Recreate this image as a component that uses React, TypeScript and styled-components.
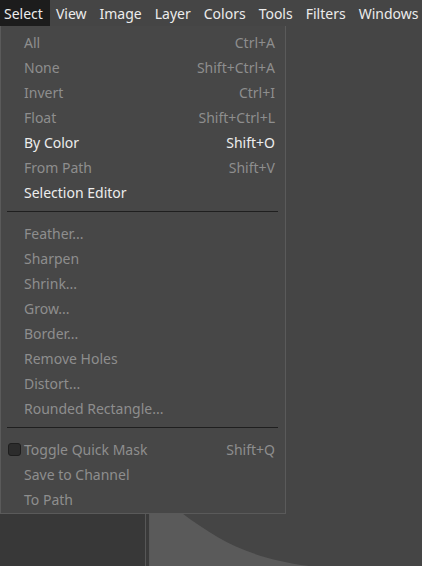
import React from "react";
import styled, { createGlobalStyle } from "styled-components";

const Global = createGlobalStyle`
  html, body { margin: 0; padding: 0; }
  body {
    width: 422px;
    height: 566px;
    overflow: hidden;
    background: #454545;
    font-family: "Noto Sans", "DejaVu Sans", sans-serif;
  }
`;

const Screen = styled.div`
  position: relative;
  width: 422px;
  height: 566px;
  display: flex;
  flex-direction: column;
  overflow: hidden;
`;

const MenuBar = styled.div`
  display: flex;
  height: 26px;
  background: #454545;
  flex: none;
`;

const BarItem = styled.div<{ $active?: boolean }>`
  display: flex;
  align-items: center;
  padding: 0 7px 0 4px;
  margin-right: 2px;
  font-size: 14px;
  color: #ececec;
  white-space: nowrap;
  background: ${(p) => (p.$active ? "#1c1c1c" : "transparent")};
`;

const Workspace = styled.div`
  flex: 1;
  display: flex;
`;

const Dock = styled.div`
  width: 145px;
  background: #383838;
  flex: none;
`;

const DockEdge = styled.div`
  width: 3px;
  flex: none;
  border-left: 1px solid #575757;
  border-right: 1px solid #575757;
  background: #3a3a3a;
`;

const Canvas = styled.div`
  flex: 1;
  position: relative;
  background: #454545;
`;

const CanvasArt = styled.svg`
  display: block;
  width: 100%;
  height: 100%;
`;

const Popup = styled.div`
  position: absolute;
  left: 0;
  top: 26px;
  width: 286px;
  box-sizing: border-box;
  background: #474747;
  border: 1px solid #5a5a5a;
  border-top: none;
  padding: 4px 0 1px;
  display: flex;
  flex-direction: column;
`;

const Row = styled.div<{ $on?: boolean }>`
  height: 25px;
  display: flex;
  align-items: center;
  padding: 0 10px 0 7px;
  font-size: 14px;
  color: ${(p) => (p.$on ? "#ededed" : "#8e8e8e")};
`;

const Check = styled.span`
  width: 11px;
  height: 11px;
  border-radius: 3px;
  background: #2c2c2c;
  border: 1px solid #1e1e1e;
  flex: none;
  margin-right: 3px;
`;

const Spacer = styled.span`
  width: 16px;
  flex: none;
`;

const Label = styled.span`
  flex: 1;
  white-space: nowrap;
`;

const Accel = styled.span`
  white-space: nowrap;
`;

const Separator = styled.div`
  height: 1px;
  background: #1f1f1f;
  margin: 6px 7px 9px 6px;
`;

type Item = { label: string; accel?: string; on?: boolean; check?: boolean } | "sep";

const items: Item[] = [
  { label: "All", accel: "Ctrl+A" },
  { label: "None", accel: "Shift+Ctrl+A" },
  { label: "Invert", accel: "Ctrl+I" },
  { label: "Float", accel: "Shift+Ctrl+L" },
  { label: "By Color", accel: "Shift+O", on: true },
  { label: "From Path", accel: "Shift+V" },
  { label: "Selection Editor", on: true },
  "sep",
  { label: "Feather..." },
  { label: "Sharpen" },
  { label: "Shrink..." },
  { label: "Grow..." },
  { label: "Border..." },
  { label: "Remove Holes" },
  { label: "Distort..." },
  { label: "Rounded Rectangle..." },
  "sep",
  { label: "Toggle Quick Mask", accel: "Shift+Q", check: true },
  { label: "Save to Channel" },
  { label: "To Path" },
];

const menus = ["Select", "View", "Image", "Layer", "Colors", "Tools", "Filters", "Windows"];

export default function App() {
  return (
    <Screen>
      <Global />
      <MenuBar>
        {menus.map((m, i) => (
          <BarItem key={m} $active={i === 0}>
            {m}
          </BarItem>
        ))}
      </MenuBar>
      <Workspace>
        <Dock />
        <DockEdge />
        <Canvas>
          <CanvasArt viewBox="0 0 274 540" preserveAspectRatio="none">
            <path d="M0 487 L32 487 C70 515 100 532 160 540 L0 540 Z" fill="#5a5a5a" />
          </CanvasArt>
        </Canvas>
      </Workspace>
      <Popup>
        {items.map((it, i) =>
          it === "sep" ? (
            <Separator key={i} />
          ) : (
            <Row key={i} $on={it.on}>
              {it.check ? <Check /> : <Spacer />}
              <Label>{it.label}</Label>
              {it.accel && <Accel>{it.accel}</Accel>}
            </Row>
          )
        )}
      </Popup>
    </Screen>
  );
}
